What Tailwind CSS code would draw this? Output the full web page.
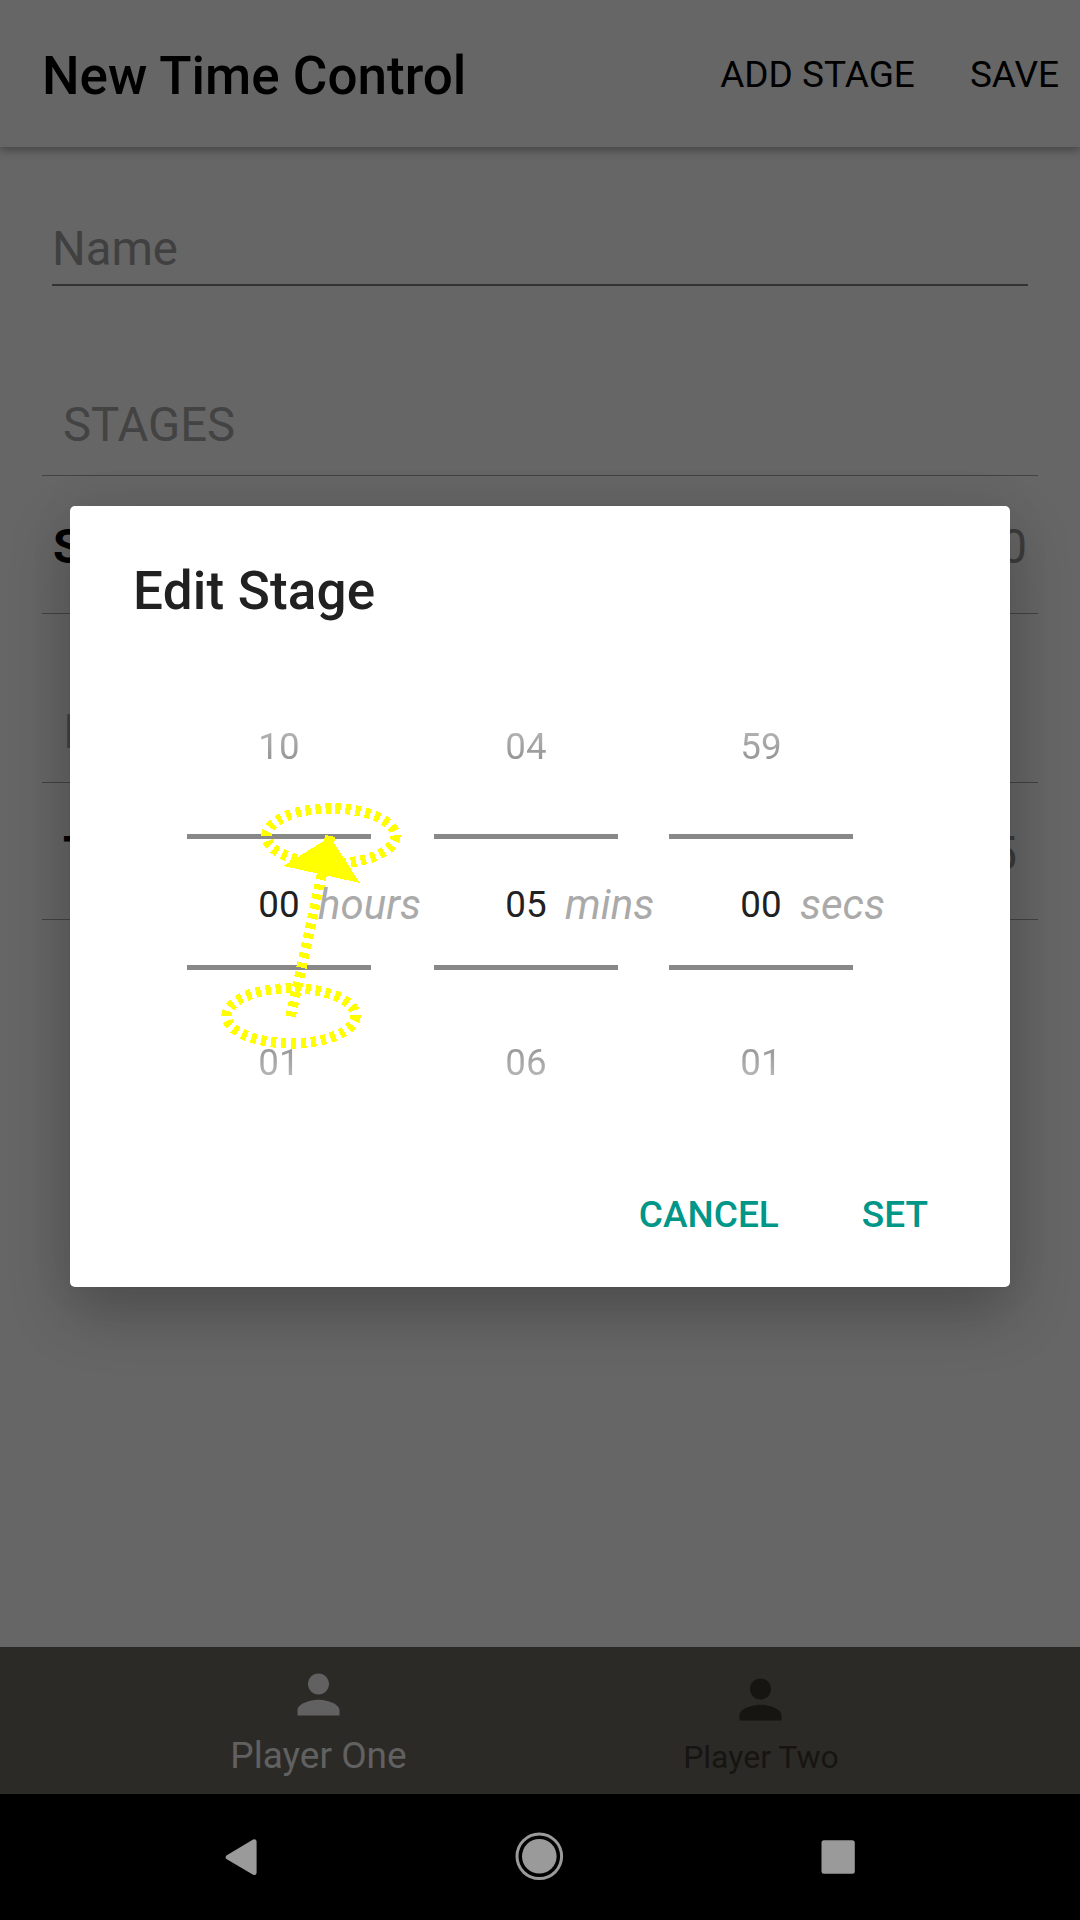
<!DOCTYPE html>
<html lang="en">
<head>
<meta charset="utf-8">
<title>New Time Control</title>
<script src="https://cdn.jsdelivr.net/npm/@tailwindcss/browser@4"></script>
</head>
<body class="bg-black">
<div class="relative flex h-[1920px] w-[1080px] flex-col overflow-hidden bg-[#666666] font-['Roboto',sans-serif]">
  <!-- App bar -->
  <header class="z-0 flex h-[147px] shrink-0 items-center justify-between bg-[#666666] pt-[3px] pr-[21px] pl-10 text-black shadow-[0_3px_9px_rgba(0,0,0,0.35)]">
    <h1 class="pt-[2px] pl-[2px] text-[53px] leading-[60px] font-medium whitespace-nowrap">New Time Control</h1>
    <nav class="flex gap-[55px] text-[37px] leading-[44px] whitespace-nowrap"><span>ADD STAGE</span><span>SAVE</span></nav>
  </header>

  <!-- Form -->
  <main class="flex h-[1500px] shrink-0 flex-col px-[42px]">
    <div class="mx-[10px] mt-[70px] h-[69px] border-b-[2px] border-[#333333] pt-[2px] text-[47.25px] leading-[60px] text-[#404040]">Name</div>
    <div class="mt-[97px] h-[93px] border-b border-[#434343] pt-[12px] pl-[21px] text-[47.25px] leading-[60px] text-[#434343]">STAGES</div>
    <div class="flex h-[138px] justify-between border-b border-[#434343] pt-[41px] pr-[11px] pl-[11px] text-[47.25px] leading-[60px]"><span class="font-bold text-black">S</span><span class="text-[#3c3c3c]">0</span></div>
    <div class="h-[169px] border-b border-[#434343] pt-[88px] pl-[21px] text-[47.25px] leading-[60px] text-[#434343]">I</div>
    <div class="flex h-[137px] justify-between border-b border-[#434343] pt-[41px] pr-[21px] pl-[21px] text-[47.25px] leading-[60px]"><span class="font-bold text-black">T</span><span class="text-[#3c3c3c]">5</span></div>
  </main>

  <!-- Player tabs -->
  <footer class="flex h-[147px] shrink-0 justify-center bg-[#2c2a26] pr-[2px]">
    <div class="flex w-[442px] flex-col items-center pt-[16px] text-[#616161]">
      <svg class="size-[63px]" viewBox="0 0 24 24" fill="currentColor"><path d="M12 12c2.21 0 4-1.79 4-4s-1.79-4-4-4-4 1.79-4 4 1.79 4 4 4zm0 2c-2.67 0-8 1.34-8 4v2h16v-2c0-2.66-5.33-4-8-4z"/></svg>
      <span class="mt-[8px] pl-[1px] text-[37px] leading-[44px]">Player One</span>
    </div>
    <div class="flex w-[442px] flex-col items-center pt-[21px] text-[#161512]">
      <svg class="size-[63px]" viewBox="0 0 24 24" fill="currentColor"><path d="M12 12c2.21 0 4-1.79 4-4s-1.79-4-4-4-4 1.79-4 4 1.79 4 4 4zm0 2c-2.67 0-8 1.34-8 4v2h16v-2c0-2.66-5.33-4-8-4z"/></svg>
      <span class="mt-[6px] pl-[2px] text-[32px] leading-[40px]">Player Two</span>
    </div>
  </footer>

  <!-- System navigation -->
  <div class="flex h-[126px] shrink-0 items-center justify-center bg-black">
    <svg class="h-[126px] w-[1080px]" viewBox="0 0 1080 126" fill="#9a9a9a">
      <path d="M228 63.2 254.3 47.6V78.8Z" stroke="#9a9a9a" stroke-width="4.6" stroke-linejoin="round"/>
      <circle cx="539.3" cy="62.3" r="22.3" fill="none" stroke="#9a9a9a" stroke-width="3"/>
      <circle cx="539.3" cy="62.3" r="17.3"/>
      <rect x="821.5" y="46.3" width="33.3" height="33.5" rx="2.5"/>
    </svg>
  </div>

  <!-- Dialog -->
  <section class="absolute top-[506px] left-[70px] flex h-[781px] w-[940px] flex-col rounded-[5px] bg-white shadow-[0_26px_62px_rgba(0,0,0,0.24),0_0_50px_rgba(0,0,0,0.05)]">
    <h2 class="h-[190px] pt-[55px] pl-[63px] text-[53px] leading-[60px] font-medium tracking-[0.2px] text-[#212121]">Edit Stage</h2>
    <div class="flex h-[400px] pl-[117px] text-center text-[36.75px] leading-[44px] text-[#212121]">
      <div class="flex w-[184px] flex-col">
        <span class="h-[138px] bg-linear-to-b from-[#b8b8b8] from-[30px] to-[#8f8f8f] to-[70px] bg-clip-text pt-[29px] text-transparent">10</span>
        <div class="flex h-[136px] items-center border-y-[5px] border-[#888888] pt-[5px] whitespace-nowrap"><span class="w-[184px] shrink-0">00</span><i class="-ml-[53px] text-[42px] text-[#aaaaaa]">hours</i></div>
        <span class="h-[126px] bg-linear-to-b from-[#8f8f8f] from-[68px] to-[#b8b8b8] to-[108px] bg-clip-text pt-[71px] text-transparent">01</span>
      </div>
      <div class="ml-[63px] flex w-[184px] flex-col">
        <span class="h-[138px] bg-linear-to-b from-[#b8b8b8] from-[30px] to-[#8f8f8f] to-[70px] bg-clip-text pt-[29px] text-transparent">04</span>
        <div class="flex h-[136px] items-center border-y-[5px] border-[#888888] pt-[5px] whitespace-nowrap"><span class="w-[184px] shrink-0">05</span><i class="-ml-[53px] text-[42px] text-[#aaaaaa]">mins</i></div>
        <span class="h-[126px] bg-linear-to-b from-[#8f8f8f] from-[68px] to-[#b8b8b8] to-[108px] bg-clip-text pt-[71px] text-transparent">06</span>
      </div>
      <div class="ml-[51px] flex w-[184px] flex-col">
        <span class="h-[138px] bg-linear-to-b from-[#b8b8b8] from-[30px] to-[#8f8f8f] to-[70px] bg-clip-text pt-[29px] text-transparent">59</span>
        <div class="flex h-[136px] items-center border-y-[5px] border-[#888888] pt-[5px] whitespace-nowrap"><span class="w-[184px] shrink-0">00</span><i class="-ml-[53px] text-[42px] text-[#aaaaaa]">secs</i></div>
        <span class="h-[126px] bg-linear-to-b from-[#8f8f8f] from-[68px] to-[#b8b8b8] to-[108px] bg-clip-text pt-[71px] text-transparent">01</span>
      </div>
    </div>
    <div class="flex justify-end gap-[83px] pt-[97px] pr-[82px] text-[37px] leading-[44px] font-medium text-[#009688]"><span>CANCEL</span><span>SET</span></div>
  </section>

  <!-- Swipe gesture annotation -->
  <svg class="pointer-events-none absolute top-[790px] left-[210px] h-[270px] w-[200px]" viewBox="210 790 200 270" fill="none" stroke="#ffff00" stroke-width="10.4" stroke-dasharray="5.2 4.8" shape-rendering="crispEdges">
    <ellipse cx="330.9" cy="836" rx="64.5" ry="27.6"/>
    <ellipse cx="291" cy="1015.8" rx="64.5" ry="27.6"/>
    <path d="M290.7 1016.5 330.3 836"/>
    <path d="M330 837 283.3 866 360 883Z" fill="#ffff00" stroke="none"/>
  </svg>
</div>
</body>
</html>
